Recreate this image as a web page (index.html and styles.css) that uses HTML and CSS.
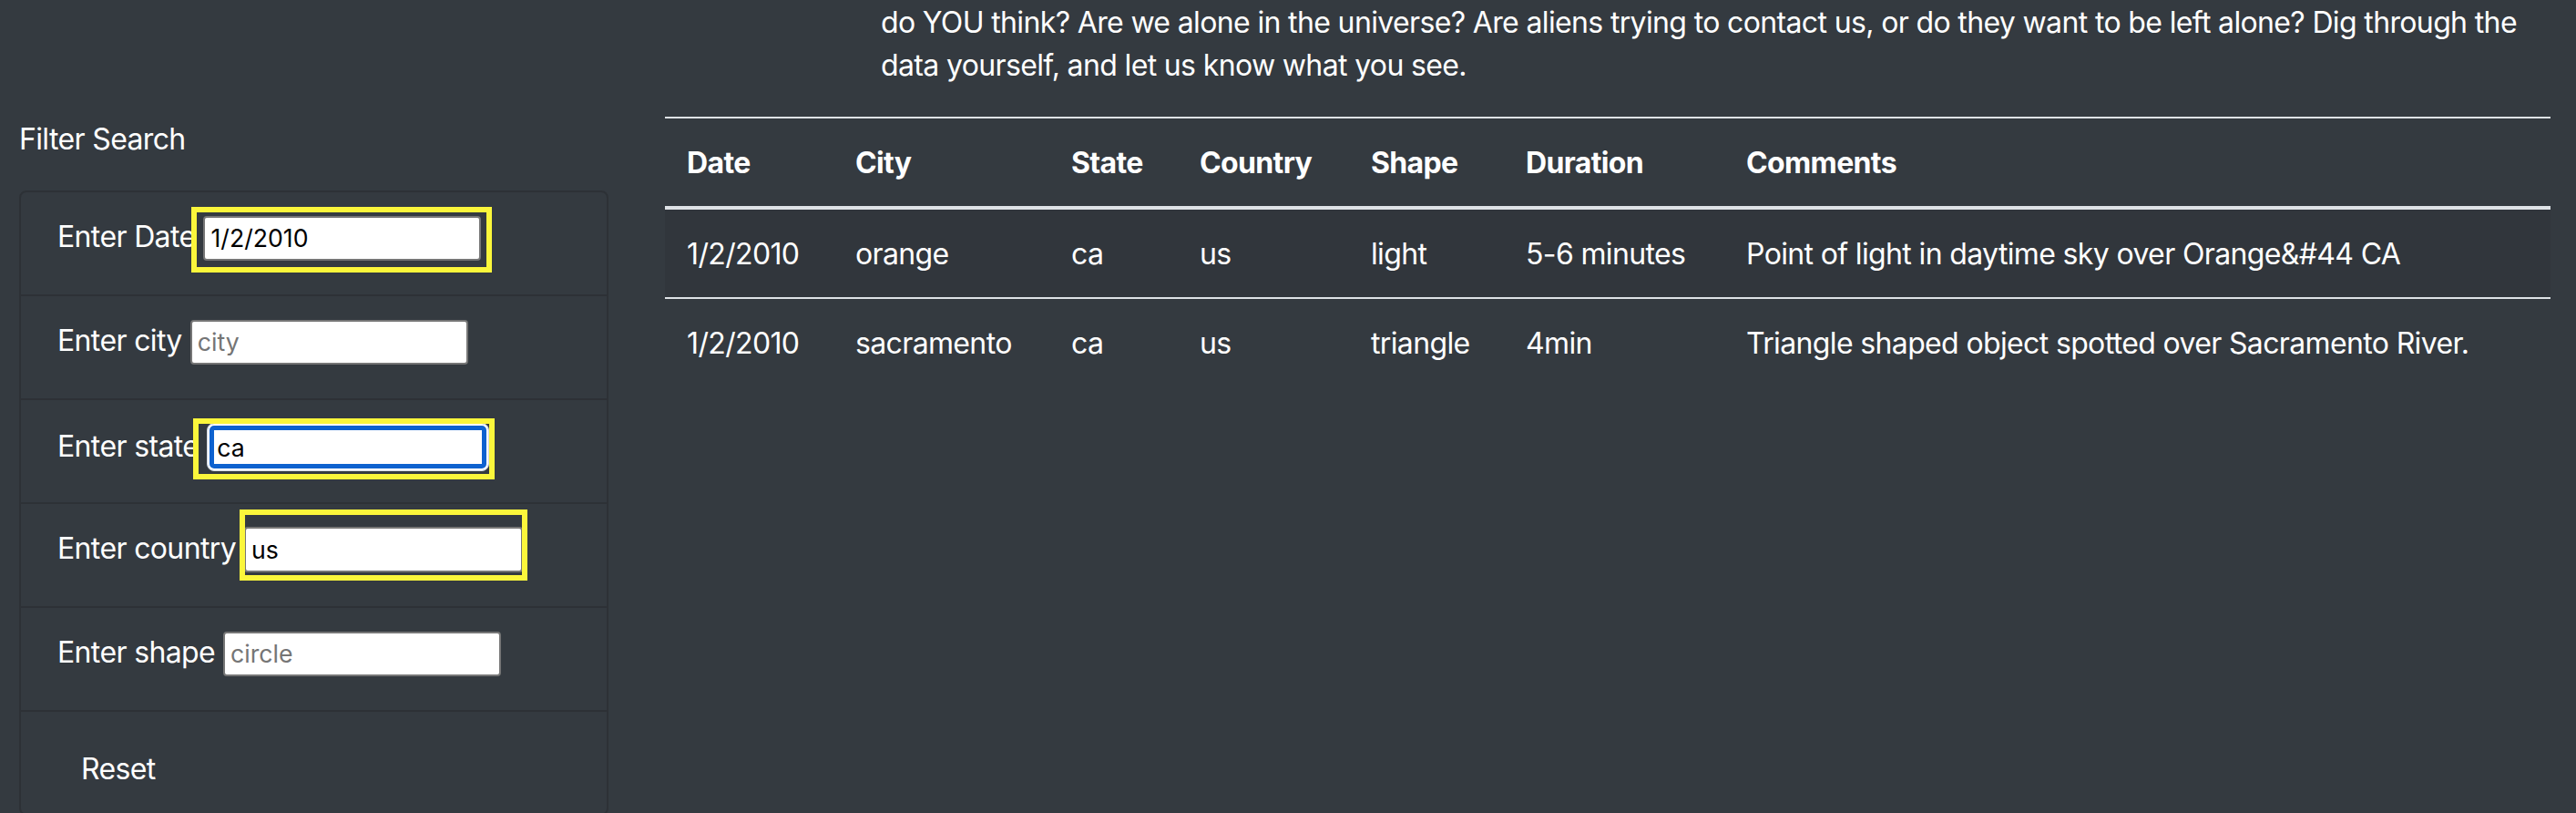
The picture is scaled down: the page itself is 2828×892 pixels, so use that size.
FILE: index.html
```html
<!DOCTYPE html>
<html lang="en">
<head>
<meta charset="utf-8">
<title>UFO Sightings</title>
<link rel="stylesheet" href="styles.css">
</head>
<body>
<div class="page">
  <p class="intro"><span class="line">do YOU think? Are we alone in the universe? Are aliens trying to contact us, or do they want to be left alone? Dig through the</span><span class="line">data yourself, and let us know what you see.</span></p>

  <aside class="sidebar">
    <div class="filter-title">Filter Search</div>
    <ul class="filters">
      <li class="filter">
        <label for="datetime">Enter Date</label>
        <span class="hl hl-date"><input id="datetime" class="field" type="text" value="1/2/2010"></span>
      </li>
      <li class="filter">
        <label for="city">Enter city</label>
        <input id="city" class="field" type="text" placeholder="city">
      </li>
      <li class="filter">
        <label for="state">Enter state</label>
        <span class="hl hl-state"><input id="state" class="field field-focus" type="text" value="ca"></span>
      </li>
      <li class="filter">
        <label for="country">Enter country</label>
        <span class="hl hl-country"><input id="country" class="field field-country" type="text" value="us"></span>
      </li>
      <li class="filter">
        <label for="shape">Enter shape</label>
        <input id="shape" class="field" type="text" placeholder="circle">
      </li>
      <li class="filter filter-btn">
        <button class="reset" type="button">Reset</button>
      </li>
    </ul>
  </aside>

  <main class="results">
    <table class="sightings">
      <colgroup>
        <col class="c-date">
        <col class="c-city">
        <col class="c-state">
        <col class="c-country">
        <col class="c-shape">
        <col class="c-duration">
        <col class="c-comments">
      </colgroup>
      <thead>
        <tr>
          <th>Date</th>
          <th>City</th>
          <th>State</th>
          <th>Country</th>
          <th>Shape</th>
          <th>Duration</th>
          <th>Comments</th>
        </tr>
      </thead>
      <tbody>
        <tr class="odd">
          <td>1/2/2010</td>
          <td>orange</td>
          <td>ca</td>
          <td>us</td>
          <td>light</td>
          <td>5-6 minutes</td>
          <td>Point of light in daytime sky over Orange&amp;#44 CA</td>
        </tr>
        <tr>
          <td>1/2/2010</td>
          <td>sacramento</td>
          <td>ca</td>
          <td>us</td>
          <td>triangle</td>
          <td>4min</td>
          <td>Triangle shaped object spotted over Sacramento River.</td>
        </tr>
      </tbody>
    </table>
  </main>
</div>
</body>
</html>
```

FILE: styles.css
```css
html {
  overflow: hidden;
}

body {
  margin: 0;
  background: #343a40;
  color: #ffffff;
  font-family: Inter, "Noto Sans", "Liberation Sans", sans-serif;
  font-size: 32px;
  line-height: 48px;
  letter-spacing: -0.02em;
}

.page {
  display: grid;
  grid-template-columns: 647px 1fr;
  grid-template-areas:
    ". intro"
    "side main";
  column-gap: 62px;
  padding: 0 28px 0 21px;
}

.intro {
  grid-area: intro;
  margin: 0 0 32px 237px;
  padding-top: 1px;
}

.intro .line {
  display: block;
  white-space: nowrap;
}

.intro .line + .line {
  margin-top: -1px;
}

.sidebar {
  grid-area: side;
}

.filter-title {
  padding-top: 1px;
  margin-bottom: 32px;
}

.filters {
  list-style: none;
  margin: 0;
  padding: 0;
  border: 2px solid #2d3136;
  border-radius: 8px;
}

.filter {
  display: flex;
  align-items: baseline;
  column-gap: 9px;
  height: 87px;
  padding: 25px 40px 0;
}

.filter + .filter {
  border-top: 2px solid #2d3136;
}

.filter label {
  white-space: nowrap;
}

.hl {
  position: relative;
  display: flex;
}

.hl::after {
  content: "";
  position: absolute;
  border: 6px solid #fbf63b;
  pointer-events: none;
}

.hl-date::after {
  left: -13px;
  right: -12px;
  top: -10px;
  bottom: -13px;
}

.hl-state::after {
  left: -15px;
  right: -6px;
  top: -5px;
  bottom: -9px;
}

.hl-country::after {
  left: -5px;
  right: -5px;
  top: -19px;
  bottom: -9px;
}

.field {
  box-sizing: border-box;
  width: 305px;
  height: 49px;
  margin: 0;
  padding: 0 6px;
  border: 2px solid #767676;
  border-radius: 4px;
  background: #ffffff;
  color: #000000;
  font-family: Inter, "Noto Sans", "Liberation Sans", sans-serif;
  font-size: 26.67px;
  letter-spacing: 0;
  outline: none;
}

.field::placeholder {
  color: #757575;
}

.field-focus {
  width: 310px;
  height: 53px;
  padding: 0 10px;
  border: 1px solid #d6dbe2;
  border-radius: 8px;
  box-shadow: inset 0 0 0 2px #ffffff, inset 0 0 0 7px #0e62cf;
}

.field-country {
  width: 306px;
  height: 50px;
}

.filter-btn {
  align-items: flex-start;
  padding-top: 24px;
  height: 88px;
}

.reset {
  margin: 0;
  padding: 13px 24px 11px;
  border: 2px solid transparent;
  background: transparent;
  color: #ffffff;
  font-family: inherit;
  font-size: 32px;
  line-height: 48px;
  letter-spacing: inherit;
}

.results {
  grid-area: main;
}

.sightings {
  width: 100%;
  table-layout: fixed;
  border-collapse: separate;
  border-spacing: 0;
}

.c-date { width: 185px; }
.c-city { width: 237px; }
.c-state { width: 141px; }
.c-country { width: 188px; }
.c-shape { width: 170px; }
.c-duration { width: 242px; }

.sightings th,
.sightings td {
  padding: 25px 24px 23px;
  text-align: left;
  vertical-align: top;
  white-space: nowrap;
}

.sightings th {
  font-weight: 700;
  border-top: 2px solid #dee2e6;
  border-bottom: 4px solid #dee2e6;
}

.sightings tbody tr + tr td {
  border-top: 2px solid #dee2e6;
}

.sightings tr.odd td {
  background: #31363c;
}
```
